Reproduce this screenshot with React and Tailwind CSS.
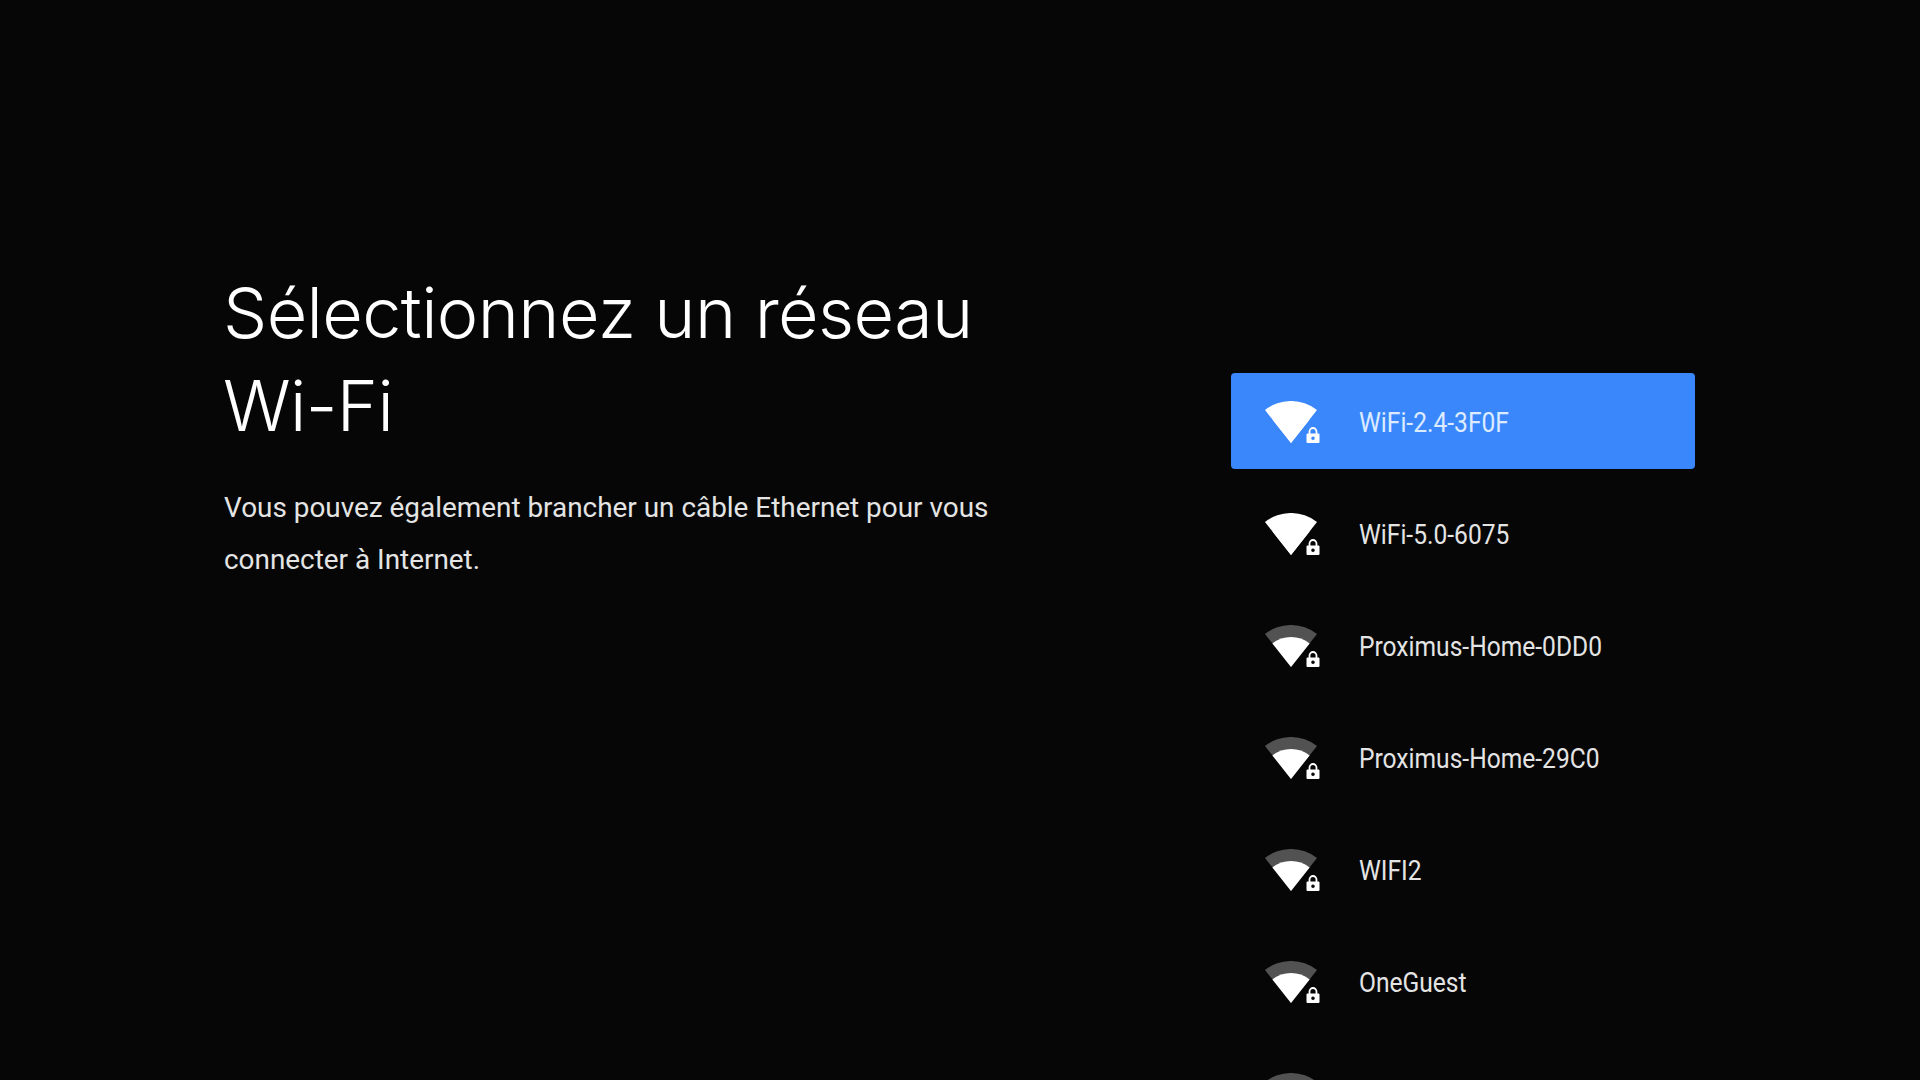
const networks = [
  { name: 'WiFi-2.4-3F0F', full: true, selected: true },
  { name: 'WiFi-5.0-6075', full: true },
  { name: 'Proximus-Home-0DD0' },
  { name: 'Proximus-Home-29C0' },
  { name: 'WIFI2' },
  { name: 'OneGuest' },
  { name: '' },
];

const WifiLockIcon = ({ full }) => (
  <svg width="60" height="44" viewBox="0 0 60 44" className="mt-[3px] shrink-0">
    <path d="M29 42 L3 9 A42 42 0 0 1 55 9 Z" fill={full ? '#ffffff' : '#525252'} />
    <path d="M29 42 L10.4 18.4 A30 30 0 0 1 47.6 18.4 Z" fill="#ffffff" />
    {/* lock */}
    <path d="M47.5 33 V30.5 A3.5 3.5 0 0 1 54.5 30.5 V33" fill="none" stroke="#ffffff" strokeWidth="1.8" />
    <path
      fillRule="evenodd"
      d="M45.5 32.5 H56.5 A1 1 0 0 1 57.5 33.5 V41 A1 1 0 0 1 56.5 42 H45.5 A1 1 0 0 1 44.5 41 V33.5 A1 1 0 0 1 45.5 32.5 Z M51 35.5 A1.8 1.8 0 1 0 51 39.1 A1.8 1.8 0 1 0 51 35.5 Z"
      fill="#ffffff"
    />
  </svg>
);

const NetworkRow = ({ name, full, selected }) => (
  <div className={`flex h-24 w-[464px] shrink-0 items-center gap-[37px] rounded pl-[31px] ${selected ? 'bg-[#3a87fc]' : ''}`}>
    <WifiLockIcon full={full} />
    <span className={`mt-[4px] origin-left scale-x-[0.878] whitespace-nowrap text-[28px] ${selected ? 'text-[#dcebff]' : 'text-[#e4e4e4]'}`}>
      {name}
    </span>
  </div>
);

export default function App() {
  return (
    <div className="flex h-screen w-full overflow-hidden bg-[#060606] font-['Roboto',sans-serif]">
      <div className="w-[1231px] shrink-0 pl-[224px] pt-[266px]">
        <h1 className="-ml-px font-['Inter',sans-serif] text-[70px] font-[350] leading-[93px] tracking-[-0.6px] text-white">
          Sélectionnez un réseau
          <br />
          Wi-Fi
        </h1>
        <p className="mt-[30px] whitespace-nowrap text-[27.9px] leading-[52px] text-[#e4e4e4]">
          Vous pouvez également brancher un câble Ethernet pour vous
          <br />
          connecter à Internet.
        </p>
      </div>
      <div className="flex flex-col gap-4 pt-[373px]">
        {networks.map((network, i) => (
          <NetworkRow key={i} {...network} />
        ))}
      </div>
    </div>
  );
}
